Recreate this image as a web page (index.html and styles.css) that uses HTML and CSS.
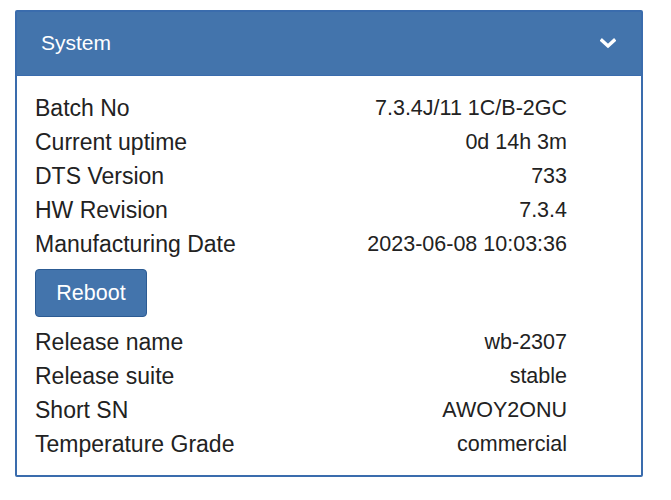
FILE: index.html
```html
<!DOCTYPE html>
<html>
<head>
<meta charset="utf-8">
<link rel="stylesheet" href="styles.css">
</head>
<body>
<div class="panel">
  <div class="panel-heading">
    <span class="title">System</span>
    <svg class="chevron" width="16" height="11" viewBox="0 0 16 11"><path d="M2 2.5 L8 8 L14 2.5" fill="none" stroke="#fff" stroke-width="3.4" stroke-linecap="square"/></svg>
  </div>
  <div class="panel-body">
    <div class="rows">
      <div class="label">Batch No</div><div class="value">7.3.4J/11 1C/B-2GC</div>
      <div class="label">Current uptime</div><div class="value">0d 14h 3m</div>
      <div class="label">DTS Version</div><div class="value">733</div>
      <div class="label">HW Revision</div><div class="value">7.3.4</div>
      <div class="label">Manufacturing Date</div><div class="value">2023-06-08 10:03:36</div>
    </div>
    <button class="btn">Reboot</button>
    <div class="rows">
      <div class="label">Release name</div><div class="value">wb-2307</div>
      <div class="label">Release suite</div><div class="value">stable</div>
      <div class="label">Short SN</div><div class="value">AWOY2ONU</div>
      <div class="label">Temperature Grade</div><div class="value">commercial</div>
    </div>
  </div>
</div>
</body>
</html>
```
FILE: styles.css
```css
html, body {
  margin: 0;
  padding: 0;
  background: #fff;
}
body {
  padding: 10px 0 0 15px;
  font-family: "Liberation Sans", Arial, sans-serif;
  color: #222;
}
.panel {
  width: 624px;
  border: 2px solid #3a6cad;
  border-radius: 2px;
}
.panel-heading {
  height: 63px;
  background: #4374ac;
  display: flex;
  align-items: center;
  justify-content: space-between;
  padding: 0 24px 0 24px;
  color: #fff;
  border-bottom: 1px solid #3a6cad;
}
.title {
  font-size: 21px;
  position: relative;
  top: -1px;
}
.chevron {
  display: block;
  position: relative;
  left: -1px;
}
.panel-body {
  padding: 15px 74px 14px 18px;
  display: flex;
  flex-direction: column;
}
.rows {
  display: grid;
  grid-template-columns: 1fr auto;
  grid-auto-rows: 34px;
  align-items: center;
}
.label {
  font-size: 23px;
}
.value {
  font-size: 21.5px;
  text-align: right;
}
.btn {
  align-self: flex-start;
  margin: 8px 0 8px 0;
  width: 112px;
  height: 48px;
  background: #4374ac;
  border: 1px solid #2c5b93;
  border-radius: 4px;
  color: #fff;
  font-family: "Liberation Sans", Arial, sans-serif;
  font-size: 21.5px;
  padding: 0;
}
```
